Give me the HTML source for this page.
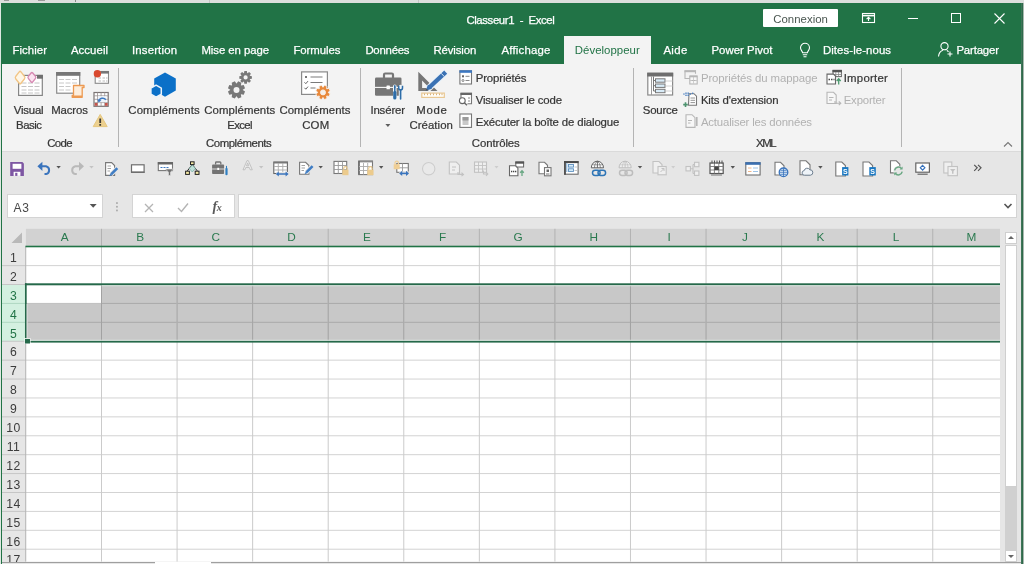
<!DOCTYPE html>
<html lang="fr"><head><meta charset="utf-8"><title>Classeur1 - Excel</title>
<style>
html,body{margin:0;padding:0}
body{width:1024px;height:564px;overflow:hidden;position:relative;background:#e6e6e6;font-family:"Liberation Sans",sans-serif;}
.abs{position:absolute}
.t{position:absolute;white-space:nowrap;line-height:1;font-size:12px}
.ch{text-align:center;color:#2a7a4f;font-size:11.8px}
.rh{text-align:center;font-size:12.2px}
svg{position:absolute;overflow:visible}
.sep{position:absolute;width:1px;top:68px;height:79px;background:#b4b4b4}
.dd{position:absolute;width:0;height:0;border-left:3px solid transparent;border-right:3px solid transparent;border-top:3px solid #666}
#w{position:absolute;left:0;top:0;width:1024px;height:564px;overflow:hidden;will-change:transform}
</style></head><body><div id="w">
<!-- outside strip -->
<div class="abs" style="left:0;top:0;width:1024px;height:3px;background:#dcdfdd"></div>
<div class="abs" style="left:75px;top:0;width:1px;height:2px;background:#8a8a8a"></div><div class="abs" style="left:209px;top:0;width:1px;height:3px;background:#c4c4c4"></div><div class="abs" style="left:418px;top:0;width:1px;height:3px;background:#c4c4c4"></div><div class="abs" style="left:4px;top:0;width:5px;height:1px;background:#9a9a9a"></div><div class="abs" style="left:38px;top:0;width:7px;height:1px;background:#9a9a9a"></div>
<div class="abs" style="left:0;top:3px;width:1px;height:561px;background:#dfe8e2"></div>
<div class="abs" style="left:1023px;top:3px;width:1px;height:561px;background:#a9b8af"></div>
<div class="abs" style="left:1px;top:3px;width:1px;height:561px;background:#217346"></div>
<div class="abs" style="left:1021px;top:3px;width:1px;height:561px;background:#3f7459"></div><div class="abs" style="left:1022px;top:3px;width:1px;height:561px;background:#2f6b4b"></div>
<!-- title + tabs -->
<div class="abs" style="left:1px;top:3px;width:1020px;height:60.5px;background:#217346"></div>
<span class="t" style="left:466.4px;top:14.65px;font-size:11.4px;color:#ffffff;letter-spacing:-0.397px;-webkit-text-stroke:0.25px #fff">Classeur1&nbsp; -&nbsp; Excel</span>
<div class="abs" style="left:763px;top:9px;width:75px;height:18px;background:#fff;border-radius:1px"></div>
<span class="t" style="left:773.2px;top:13.65px;font-size:11.4px;color:#4a5650;letter-spacing:0.034px">Connexion</span>
<!-- window buttons -->
<svg style="left:860px;top:11px" width="18" height="14" viewBox="0 0 18 14" fill="none" stroke="#fff" stroke-width="1.1"><rect x="2.5" y="2.5" width="12" height="9"/><path d="M2.5 4.6h12" stroke-width="1.6"/><path d="M8.5 10V6.3M6.6 8.2l1.9-1.9 1.9 1.9"/></svg>
<div class="abs" style="left:908px;top:18px;width:10px;height:1px;background:#fff"></div>
<div class="abs" style="left:951px;top:13px;width:9px;height:9px;border:1px solid #fff;box-sizing:border-box;width:10px;height:10px"></div>
<svg style="left:994px;top:13px" width="11" height="11" viewBox="0 0 11 11" stroke="#fff" stroke-width="1.1"><path d="M0.5 0.5l10 10M10.5 0.5l-10 10"/></svg>
<!-- tabs -->
<span class="t" style="left:12.4px;top:44.65px;font-size:11.4px;color:#ffffff;letter-spacing:0.075px;-webkit-text-stroke:0.25px #fff">Fichier</span>
<span class="t" style="left:70.9px;top:44.65px;font-size:11.4px;color:#ffffff;letter-spacing:0.068px;-webkit-text-stroke:0.25px #fff">Accueil</span>
<span class="t" style="left:131.9px;top:44.65px;font-size:11.4px;color:#ffffff;letter-spacing:0.180px;-webkit-text-stroke:0.25px #fff">Insertion</span>
<span class="t" style="left:201.4px;top:44.65px;font-size:11.4px;color:#ffffff;letter-spacing:-0.068px;-webkit-text-stroke:0.25px #fff">Mise en page</span>
<span class="t" style="left:293.4px;top:44.65px;font-size:11.4px;color:#ffffff;letter-spacing:-0.049px;-webkit-text-stroke:0.25px #fff">Formules</span>
<span class="t" style="left:365.4px;top:44.65px;font-size:11.4px;color:#ffffff;letter-spacing:-0.245px;-webkit-text-stroke:0.25px #fff">Données</span>
<span class="t" style="left:433.4px;top:44.65px;font-size:11.4px;color:#ffffff;letter-spacing:-0.121px;-webkit-text-stroke:0.25px #fff">Révision</span>
<span class="t" style="left:501.4px;top:44.65px;font-size:11.4px;color:#ffffff;letter-spacing:0.218px;-webkit-text-stroke:0.25px #fff">Affichage</span>
<div class="abs" style="left:564px;top:36px;width:87px;height:28px;background:#f3f3f3"></div>
<span class="t" style="left:574.8px;top:44.65px;font-size:11.4px;color:#217346;letter-spacing:0.035px">Développeur</span>
<span class="t" style="left:663.4px;top:44.65px;font-size:11.4px;color:#ffffff;letter-spacing:0.343px;-webkit-text-stroke:0.25px #fff">Aide</span>
<span class="t" style="left:711.4px;top:44.65px;font-size:11.4px;color:#ffffff;letter-spacing:0.036px;-webkit-text-stroke:0.25px #fff">Power Pivot</span>
<svg style="left:798px;top:41px" width="14" height="18" viewBox="0 0 14 18" fill="none" stroke="#fff" stroke-width="1.1"><path d="M4.6 11.8c0-1.6-2.1-2.6-2.1-5a4.5 4.5 0 0 1 9 0c0 2.400-2.100 3.400-2.100 5zM4.800 13.800h4.400M5.500 15.800h3"/></svg>
<span class="t" style="left:822.9px;top:44.65px;font-size:11.4px;color:#ffffff;letter-spacing:0.086px;-webkit-text-stroke:0.25px #fff">Dites-le-nous</span>
<svg style="left:937px;top:41px" width="17" height="17" viewBox="0 0 17 17" fill="none" stroke="#fff" stroke-width="1.1"><circle cx="7.500" cy="5.200" r="3.600"/><path d="M1.500 15.500c0.400-3.600 2.600-5.600 4.400-6.200M9.800 9.600c0.600 0.300 1.200 0.700 1.700 1.200M13 10.500v5M10.500 13h5"/></svg>
<span class="t" style="left:956.4px;top:44.65px;font-size:11.4px;color:#ffffff;letter-spacing:-0.152px;-webkit-text-stroke:0.25px #fff">Partager</span>
<!-- ribbon -->
<div class="abs" style="left:2px;top:63.5px;width:1019px;height:87px;background:#f3f3f3"></div>
<div class="abs" style="left:2px;top:150.5px;width:1019px;height:1px;background:#dadada"></div>
<div class="sep" style="left:118px"></div>
<div class="sep" style="left:360px"></div>
<div class="sep" style="left:632.5px"></div>
<div class="sep" style="left:901px"></div>
<!-- group Code -->
<svg style="left:0;top:0" width="1024" height="564" viewBox="0 0 1024 564" fill="none">
<!-- Visual Basic -->
<g>
<rect x="18.600" y="75.400" width="23.700" height="20" fill="#fff" stroke="#858585" stroke-width="1.200"/>
<rect x="37" y="74.900" width="5.900" height="3.800" fill="#6f6f6f"/>
<g stroke="#c4c4c4" stroke-width="1"><path d="M21.500 83h5M28 83h5M34.500 83h5M21.500 86.500h5M28 86.500h5M34.500 86.500h5M21.500 90h5M28 90h5M34.500 90h5M21.500 93h5M28 93h5M34.500 93h5"/></g>
<rect x="-4.300" y="-4.300" width="8.600" height="8.600" rx="1.600" transform="translate(20.100 77.600) scale(0.880 1.120) rotate(45)" fill="#fef6e6" stroke="#f2c585" stroke-width="1.400"/>
<rect x="-3.500" y="-3.500" width="7" height="7" rx="1.500" transform="translate(31.900 77.400) scale(0.900 1.100) rotate(45)" fill="#fbe3f0" stroke="#d78ab3" stroke-width="1.400"/>
</g>
<!-- Macros -->
<g>
<rect x="56.700" y="72.600" width="23" height="20.600" fill="#fff" stroke="#8a8a8a" stroke-width="1.200"/>
<rect x="56.100" y="72" width="24.200" height="3.800" fill="#777"/>
<g stroke="#c8c8c8" stroke-width="1"><path d="M59 79.500h5M65.500 79.500h5M72 79.500h5M59 83h5M65.500 83h5M72 83h5M59 86.500h5M65.500 86.500h5M59 90h5M65.500 90h5"/></g>
<path d="M73.500 85.500h10.500v2h-1.800v9.800h-10v-2h1.300z" fill="#fdeedd" stroke="#ed9a52" stroke-width="1.300" stroke-linejoin="round"/>
<path d="M72 96.500h10" stroke="#ed9a52" stroke-width="2"/>
</g>
<!-- small: record macro -->
<g>
<rect x="95.200" y="71.500" width="13.300" height="11.800" fill="#fff" stroke="#8a8a8a" stroke-width="1.100"/>
<rect x="101" y="71" width="8" height="2.600" fill="#777"/>
<g stroke="#bbb" stroke-width="1"><path d="M98.500 78h2.500M102.500 78h2.500M98.500 81h2.500M102.500 81h2.500M106 78h1.500M106 81h1.500"/></g>
<circle cx="97.400" cy="73.700" r="3.700" fill="#d9492f"/>
</g>
<!-- small: relative refs -->
<g>
<rect x="94" y="92.500" width="14.200" height="13.800" fill="#fff" stroke="#7a7474" stroke-width="1.200"/>
<path d="M94 95.800h14.200M94 99.300h14.200M94 102.600h14.200M97.500 92.500v13.800M101.100 92.500v13.800M104.700 92.500v13.800" stroke="#9a9292" stroke-width=".8"/>
<rect x="94.700" y="103" width="2.800" height="2.800" fill="#c5544b"/><rect x="104.900" y="103" width="2.800" height="2.800" fill="#c5544b"/>
<rect x="97.900" y="96.200" width="8.400" height="6" fill="#eef4fa"/>
<path d="M99 101c.3-2.800 4.800-4 6.800-1.200" stroke="#3d78c0" stroke-width="1.500"/><path d="M97.300 99l1.200 3.400 2.900-1.900z" fill="#3d78c0"/>
</g>
<!-- small: warning -->
<g>
<path d="M100.200 114.400l7 12.200h-14z" fill="#ecd08f" stroke="#e6c77e" stroke-width="1" stroke-linejoin="round"/>
<path d="M100.200 118.400v4.600M100.200 124v1.700" stroke="#3e3a33" stroke-width="1.800"/>
</g>
<!-- Compléments (hexagons) -->
<g>
<path d="M165 72.400l10.800 6v12.200l-10.800 6.100-10.800-6.100v-12.200z" fill="#0b70c8"/>
<path d="M156.100 85.200l5.200 3v6l-5.200 3-5.200-3v-6z" fill="#0b70c8" stroke="#eef4fa" stroke-width="1.500" stroke-linejoin="round"/>
</g>
<!-- Gears -->
<path d="M242.80 90.02 L245.03 91.60 L243.73 94.73 L241.04 94.27 L240.87 94.44 L241.33 97.13 L238.20 98.43 L236.62 96.20 L236.38 96.20 L234.80 98.43 L231.67 97.13 L232.13 94.44 L231.96 94.27 L229.27 94.73 L227.97 91.60 L230.20 90.02 L230.20 89.78 L227.97 88.20 L229.27 85.07 L231.96 85.53 L232.13 85.36 L231.67 82.67 L234.80 81.37 L236.38 83.60 L236.62 83.60 L238.20 81.37 L241.33 82.67 L240.87 85.36 L241.04 85.53 L243.73 85.07 L245.03 88.20 L242.80 89.78Z M239.50 89.90a3.0 3.0 0 1 0 -6.00 0a3.0 3.0 0 1 0 6.00 0Z" fill="#787878" fill-rule="evenodd"/>
<path d="M249.79 75.76 L251.88 76.15 L251.88 78.65 L249.79 79.04 L249.72 79.20 L250.92 80.96 L249.16 82.72 L247.40 81.52 L247.24 81.59 L246.85 83.68 L244.35 83.68 L243.96 81.59 L243.80 81.52 L242.04 82.72 L240.28 80.96 L241.48 79.20 L241.41 79.04 L239.32 78.65 L239.32 76.15 L241.41 75.76 L241.48 75.60 L240.28 73.84 L242.04 72.08 L243.80 73.28 L243.96 73.21 L244.35 71.12 L246.85 71.12 L247.24 73.21 L247.40 73.28 L249.16 72.08 L250.92 73.84 L249.72 75.60Z M247.70 77.40a2.1 2.1 0 1 0 -4.20 0a2.1 2.1 0 1 0 4.20 0Z" fill="#787878" fill-rule="evenodd"/>
<!-- COM -->
<g>
<rect x="301.600" y="71.900" width="25.800" height="22.500" fill="#fff" stroke="#8a8a8a" stroke-width="1.200"/>
<path d="M310.500 77h12M310.500 82.500h12M310.500 88h5" stroke="#7a7a7a" stroke-width="1.100"/>
<rect x="305" y="76" width="2" height="2" fill="#777"/>
<path d="M304.500 82.300l1.300 1.400 2.200-2.600M304.500 87.800l1.300 1.400 2.200-2.600" stroke="#666" stroke-width="1"/>
<circle cx="323" cy="92.400" r="6.200" fill="#f6efe8"/><path d="M328.20 92.50 L330.16 93.82 L329.07 96.46 L326.75 96.00 L326.60 96.15 L327.06 98.47 L324.42 99.56 L323.10 97.60 L322.90 97.60 L321.58 99.56 L318.94 98.47 L319.40 96.15 L319.25 96.00 L316.93 96.46 L315.84 93.82 L317.80 92.50 L317.80 92.30 L315.84 90.98 L316.93 88.34 L319.25 88.80 L319.40 88.65 L318.94 86.33 L321.58 85.24 L322.90 87.20 L323.10 87.20 L324.42 85.24 L327.06 86.33 L326.60 88.65 L326.75 88.80 L329.07 88.34 L330.16 90.98 L328.20 92.30Z M325.50 92.40a2.5 2.5 0 1 0 -5.00 0a2.5 2.5 0 1 0 5.00 0Z" fill="#e8883a" stroke="#f6f1ec" stroke-width=".9" fill-rule="evenodd"/>
</g>
<!-- Insérer -->
<g>
<path d="M384 78v-3.300a1.200 1.200 0 0 1 1.200-1.200h6.600a1.200 1.200 0 0 1 1.200 1.200v3.300" stroke="#767676" stroke-width="2.200"/>
<rect x="375" y="77.500" width="26.500" height="18.300" rx="1.300" fill="#767676"/>
<path d="M375 87.400h26.500" stroke="#fbfbfb" stroke-width="1.100"/>
<rect x="386.500" y="85.600" width="3.400" height="3.600" rx=".5" fill="#fff"/>
<g stroke="#eef4f9" stroke-width="3.600" stroke-linecap="round"><path d="M394.800 86.200v12.600M400.600 86.500v12.300"/></g>
<path d="M394.800 85.200v6" stroke="#2e6da8" stroke-width="1.500"/><path d="M394.800 85.200l-.9 2.600h1.800z" fill="#2e6da8"/><path d="M394.800 92.400v5.600" stroke="#2e6da8" stroke-width="3.200" stroke-linecap="round"/>
<path d="M400.600 90v9" stroke="#2e6da8" stroke-width="1.600" stroke-linecap="round"/><path d="M398.700 85.800v2.200a1.900 1.900 0 0 0 3.800 0v-2.200" stroke="#2e6da8" stroke-width="1.500"/>
</g>
<!-- Mode création -->
<g>
<path d="M418.300 71.700v19.200h19.200z M422.100 80.400v7.600h7.300z" fill="#767676" fill-rule="evenodd"/>
<path d="M446.300 71.600l-19 17.700" stroke="#eaf2f9" stroke-width="6.600"/>
<path d="M445.700 72.100l-16.200 15.100" stroke="#3b72b4" stroke-width="4.300"/>
<path d="M428 84.600l-2.300 6.200 6.300-2z" fill="#3b72b4"/>
<path d="M425.700 90.800l.8-2.200 1.500 1.500z" fill="#555"/>
<path d="M441.200 73.300l3.200 3.400" stroke="#dbe8f5" stroke-width="1"/>
<rect x="421.800" y="93.100" width="22.500" height="4.300" fill="#fffdf8" stroke="#e9c893" stroke-width="1.200"/>
<path d="M424.500 93.500v1.700M427.500 93.500v1.700M430.500 93.500v1.700M433.500 93.500v1.700M436.500 93.500v1.700M439.500 93.500v1.700M442 93.500v1.700" stroke="#d9b27a" stroke-width="1"/>
</g>
<!-- small: properties -->
<g>
<rect x="459.900" y="70.800" width="11.600" height="13.200" fill="#fff" stroke="#777" stroke-width="1.100"/>
<rect x="459.400" y="70.300" width="12.600" height="2.500" fill="#3c78c2"/>
<rect x="462" y="75.300" width="2" height="2" fill="#666"/><path d="M465.500 76.300h4M465.500 80.500h4" stroke="#888" stroke-width="1"/><circle cx="463" cy="80.500" r="1" stroke="#666" stroke-width=".8"/>
</g>
<!-- small: view code -->
<g>
<path d="M461 100v-6.700h10.500v10.500h-4" stroke="#777" stroke-width="1.100" fill="#fff"/>
<rect x="460.500" y="92.800" width="11.500" height="2.200" fill="#666"/>
<path d="M468 98h2M468 101h2" stroke="#888" stroke-width="1"/>
<circle cx="462.300" cy="100.700" r="2.900" fill="#fff" stroke="#666" stroke-width="1.100"/><path d="M464.300 102.800l2.700 2.500" stroke="#666" stroke-width="1.400"/>
</g>
<!-- small: run dialog -->
<g>
<rect x="459.900" y="114" width="11.600" height="13.400" fill="#fff" stroke="#777" stroke-width="1.100"/>
<rect x="462.500" y="117" width="6" height="8" fill="#c9c9c9"/><rect x="462.500" y="117" width="6" height="3.500" fill="#9a9a9a"/>
</g>
<!-- Source -->
<g>
<rect x="647.800" y="73.300" width="24.800" height="21.700" fill="#fff" stroke="#8a8a8a" stroke-width="1.200"/>
<rect x="647.200" y="72.700" width="26" height="3.800" fill="#6e6e6e"/>
<path d="M651.500 76.500v18.500" stroke="#9a9a9a" stroke-width="1"/>
<path d="M666 81h6.500M666 86h6.500M666 91h6.500" stroke="#d0d0d0" stroke-width="1"/>
<path d="M653.500 76.500v14.500h2M653.500 80.500h2M653.500 85.700h2" stroke="#777" stroke-width="1"/>
<g fill="#d9ecf8" stroke="#777" stroke-width="1"><rect x="655.500" y="78.800" width="9.500" height="3.400"/><rect x="655.500" y="84" width="9.500" height="3.400"/><rect x="655.500" y="89.300" width="9.500" height="3.400"/></g>
</g>
<!-- small XML: map props (disabled) -->
<g stroke="#b6b6b6" stroke-width="1.100">
<path d="M691 78.500h-6v-7.700h10.500v3" fill="none"/><path d="M684.500 71.300h11.500" stroke-width="1.800"/>
<rect x="689.800" y="76" width="7.400" height="8" fill="#f7f7f7"/><path d="M689.800 76.500h7.400" stroke-width="1.600"/>
<path d="M691.500 80.500h1.500M694 80.500h1.500" stroke-width="1"/><path d="M693.500 77v6.500M690 80.500h7" stroke-width=".6"/>
</g>
<!-- small XML: expansion packs -->
<g>
<path d="M689 93.700h5l2.500 2.500v9h-8z" fill="#fff" stroke="#777" stroke-width="1.100"/>
<path d="M690.500 98h4.500M690.500 100.300h4.500M690.500 102.600h4.500" stroke="#888" stroke-width=".9"/>
<g fill="#4a7fc0"><rect x="683.300" y="93.400" width="1.300" height="1.300"/><rect x="685.300" y="92.500" width="1.400" height="1.400"/><rect x="685.300" y="94.600" width="1.400" height="1.400"/><rect x="687.500" y="92.500" width="1.400" height="1.400"/><rect x="687.500" y="94.600" width="1.400" height="1.400"/><rect x="689.700" y="93.400" width="1.300" height="1.300"/><rect x="692" y="92.600" width="1.300" height="1.300"/></g>
<path d="M685.500 102.300v4.600M683.200 104.600h4.600" stroke="#4f9470" stroke-width="1.600"/>
</g>
<!-- small XML: refresh data (disabled) -->
<g stroke="#b6b6b6" stroke-width="1.100">
<path d="M686 114.700h6l3 3v9.700h-9z" fill="#f7f7f7"/>
<path d="M688 120.500h4M688 123h2.500" stroke-width="1"/><path d="M696.800 117v9" stroke-width="1.600"/>
</g>
<!-- Import -->
<g>
<rect x="833" y="70.400" width="8.400" height="6.200" fill="#fff" stroke="#666" stroke-width="1"/><rect x="832.500" y="69.900" width="9.400" height="2.400" fill="#555"/>
<path d="M835.800 72v4.500M838.600 72v4.500M833 74.500h8.400" stroke="#888" stroke-width=".8"/>
<path d="M827 74.100h6.500l2 2v7.900h-8.500z" fill="#fff" stroke="#666" stroke-width="1.100"/>
<path d="M828.500 79.500h1.500M831 79.500h1.500M833.500 79.500h1" stroke="#444" stroke-width="1.300"/>
<path d="M838.700 84.500v-5.500M836.700 81l2-2.200 2 2.200" stroke="#4d9a6f" stroke-width="1.300"/>
</g>
<!-- Export (disabled) -->
<g stroke="#b6b6b6" stroke-width="1.100">
<path d="M827 92.300h6.500l2.700 2.700v8.500h-9.200z" fill="#f7f7f7"/>
<path d="M829 97.500h4.500M829 100h3" stroke-width="1"/>
<path d="M835 101v2.200h5.500M838.800 101.300l2 1.900-2 1.900" />
</g>
</svg>

<span class="t" style="left:13.8px;top:104.65px;font-size:11.4px;color:#363636;letter-spacing:-0.218px;-webkit-text-stroke:0.22px #363636">Visual</span>
<span class="t" style="left:16.1px;top:119.65px;font-size:11.4px;color:#363636;letter-spacing:-0.530px;-webkit-text-stroke:0.22px #363636">Basic</span>
<span class="t" style="left:51.2px;top:104.65px;font-size:11.4px;color:#363636;letter-spacing:-0.141px;-webkit-text-stroke:0.22px #363636">Macros</span>
<span class="t" style="left:47.2px;top:137.65px;font-size:11.4px;color:#363636;letter-spacing:-0.631px;-webkit-text-stroke:0.22px #363636">Code</span>
<!-- group Compléments -->
<span class="t" style="left:128.3px;top:104.65px;font-size:11.4px;color:#363636;letter-spacing:0.116px;-webkit-text-stroke:0.22px #363636">Compléments</span>
<span class="t" style="left:204.2px;top:104.65px;font-size:11.4px;color:#363636;letter-spacing:0.076px;-webkit-text-stroke:0.22px #363636">Compléments</span>
<span class="t" style="left:227.2px;top:119.65px;font-size:11.4px;color:#363636;letter-spacing:-0.630px;-webkit-text-stroke:0.22px #363636">Excel</span>
<span class="t" style="left:279.4px;top:104.65px;font-size:11.4px;color:#363636;letter-spacing:0.086px;-webkit-text-stroke:0.22px #363636">Compléments</span>
<span class="t" style="left:302.2px;top:119.65px;font-size:11.4px;color:#363636;letter-spacing:0.181px;-webkit-text-stroke:0.22px #363636">COM</span>
<span class="t" style="left:206.1px;top:137.65px;font-size:11.4px;color:#363636;letter-spacing:-0.464px;-webkit-text-stroke:0.22px #363636">Compléments</span>
<!-- group Contrôles -->
<span class="t" style="left:370.4px;top:104.65px;font-size:11.4px;color:#363636;letter-spacing:-0.136px;-webkit-text-stroke:0.22px #363636">Insérer</span>
<svg style="left:384px;top:122px" width="8" height="6" viewBox="0 0 8 6"><path d="M1.400 2h5l-2.500 2.900z" fill="#5e5e5e"/></svg>
<span class="t" style="left:416.2px;top:104.65px;font-size:11.4px;color:#363636;letter-spacing:0.713px;-webkit-text-stroke:0.22px #363636">Mode</span>
<span class="t" style="left:409.4px;top:119.65px;font-size:11.4px;color:#363636;letter-spacing:0.068px;-webkit-text-stroke:0.22px #363636">Création</span>
<span class="t" style="left:475.7px;top:72.65px;font-size:11.4px;color:#363636;letter-spacing:-0.131px;-webkit-text-stroke:0.22px #363636">Propriétés</span>
<span class="t" style="left:475.7px;top:94.65px;font-size:11.4px;color:#363636;letter-spacing:-0.161px;-webkit-text-stroke:0.22px #363636">Visualiser le code</span>
<span class="t" style="left:475.7px;top:116.65px;font-size:11.4px;color:#363636;letter-spacing:-0.140px;-webkit-text-stroke:0.22px #363636">Exécuter la boîte de dialogue</span>
<span class="t" style="left:471.8px;top:137.65px;font-size:11.4px;color:#363636;letter-spacing:-0.101px;-webkit-text-stroke:0.22px #363636">Contrôles</span>
<!-- group XML -->
<span class="t" style="left:642.8px;top:104.65px;font-size:11.4px;color:#363636;letter-spacing:-0.211px;-webkit-text-stroke:0.22px #363636">Source</span>
<span class="t" style="left:700.9px;top:72.65px;font-size:11.4px;color:#b1b1b1;letter-spacing:-0.089px">Propriétés du mappage</span>
<span class="t" style="left:700.9px;top:94.65px;font-size:11.4px;color:#363636;letter-spacing:-0.120px;-webkit-text-stroke:0.22px #363636">Kits d'extension</span>
<span class="t" style="left:700.9px;top:116.65px;font-size:11.4px;color:#b1b1b1;letter-spacing:-0.165px">Actualiser les données</span>
<span class="t" style="left:843.7px;top:72.65px;font-size:11.4px;color:#363636;letter-spacing:0.260px;-webkit-text-stroke:0.22px #363636">Importer</span>
<span class="t" style="left:843.7px;top:94.65px;font-size:11.4px;color:#b1b1b1;letter-spacing:-0.175px">Exporter</span>
<span class="t" style="left:756.0px;top:137.65px;font-size:11.4px;color:#363636;letter-spacing:-1.441px;-webkit-text-stroke:0.22px #363636">XML</span>
<svg style="left:1003px;top:141px" width="10" height="7" viewBox="0 0 10 7" fill="none" stroke="#777" stroke-width="1.1"><path d="M1 5.500l4-4 4 4"/></svg>
<!-- QAT -->
<svg style="left:0;top:0" width="1024" height="564" viewBox="0 0 1024 564" fill="none">
<!-- save -->
<path d="M10.200 162.100h12.200l1.500 1.500v12.300h-13.700z" fill="#7e57a3"/>
<rect x="12.600" y="163.800" width="8.800" height="5" fill="#fff"/><rect x="13.600" y="171.800" width="6.800" height="4.100" fill="#fff"/><rect x="15.200" y="172.800" width="2.200" height="3.100" fill="#7e57a3"/>
<!-- undo -->
<path d="M39.500 166.300h6.500a4 4 0 0 1 0 7.800h-1.500" stroke="#3a74bd" stroke-width="2" />
<path d="M37.400 166.300l5-4.600v9.200z" fill="#3a74bd"/>
<path d="M56.400 165.900h4.400l-2.200 2.700z" fill="#555"/>
<!-- redo -->
<path d="M81.800 166.300h-6.500a4 4 0 0 0 0 7.800h1.500" stroke="#b9b9b9" stroke-width="2" />
<path d="M84 166.300l-5-4.600v9.200z" fill="#b9b9b9"/>
<path d="M89.300 165.900h4.400l-2.200 2.700z" fill="#c3c3c3"/>
<!-- doc pencil -->
<g id="docpen">
<path d="M105.600 162.600h6l3 3v9.800h-9z" fill="#fff" stroke="#777" stroke-width="1.100"/>
<path d="M107.500 166h3.500M107.500 168.500h3.500M107.500 171h2.500" stroke="#999" stroke-width=".9"/>
<path d="M117.300 168.200l-6.300 6.300" stroke="#e6e6e6" stroke-width="4.500"/>
<path d="M117.300 168.200l-6 6" stroke="#3f7dc4" stroke-width="2.600"/><path d="M110.600 173.300l-1.300 3 3-1.200z" fill="#3f7dc4"/>
</g>
<!-- rectangle -->
<rect x="131.500" y="164.800" width="12.600" height="7.400" fill="#fff" stroke="#6e6e6e" stroke-width="1.200"/><path d="M131 172.300h13.600" stroke="#6e6e6e" stroke-width="1.400"/>
<!-- filter form -->
<rect x="158.300" y="162.600" width="14.200" height="8" fill="#fff" stroke="#777" stroke-width="1.100"/><rect x="157.800" y="162.100" width="15.200" height="2.400" fill="#666"/>
<path d="M160.500 167.500h2M163.500 167.500h2M166.500 167.500h2" stroke="#3d78c0" stroke-width="1.200"/>
<path d="M165.500 169h8l-3 3.200v3.300h-2v-3.300z" fill="#707070" stroke="#e6e6e6" stroke-width=".6"/>
<!-- org chart -->
<path d="M192.300 164.600l-5 6.300M192.300 164.600l5 6.300" stroke="#222" stroke-width="1"/>
<path d="M192.300 165l3 3.500-3 3.500-3-3.500z" fill="#bfe0d9" stroke="#7fb5aa" stroke-width=".8"/>
<rect x="190.500" y="161.800" width="3.600" height="2.800" fill="#f5e9a4" stroke="#222" stroke-width="1"/>
<rect x="185.600" y="171.200" width="3.800" height="3.200" fill="#f5e9a4" stroke="#222" stroke-width="1"/>
<rect x="195.200" y="171.200" width="3.800" height="3.200" fill="#f5e9a4" stroke="#222" stroke-width="1"/>
<!-- briefcase small -->
<path d="M215.600 164.600v-1.800a.8 .8 0 0 1 .8-.8h3.600a.8 .8 0 0 1 .8 .8v1.800" stroke="#737373" stroke-width="1.300"/>
<rect x="212.100" y="164.600" width="12" height="9.400" rx=".8" fill="#737373"/><path d="M212.100 169h12" stroke="#e6e6e6" stroke-width=".9"/><rect x="217.300" y="167.800" width="1.800" height="2.200" fill="#fff"/>
<path d="M226.500 166v8.500" stroke="#e6e6e6" stroke-width="3.600"/><path d="M226.500 165.900v3" stroke="#2f7fc1" stroke-width="1"/><path d="M226.500 168.900v5.300" stroke="#2f7fc1" stroke-width="2.200" stroke-linecap="round"/>
<!-- A disabled -->
<path d="M243 169.800l4-9.200h1.300l4 9.200h-2.100l-.9-2.300h-3.500l-.9 2.300zM246.500 165.900h2.300l-1.150-3z" fill="#ededed" stroke="#bdbdbd" stroke-width=".9" stroke-linejoin="round"/>
<path d="M259 165.900h4.400l-2.200 2.700z" fill="#c3c3c3"/>
<!-- table with blue arrow -->
<rect x="273.800" y="162" width="13.600" height="11.500" fill="#fff" stroke="#666" stroke-width="1.100"/><path d="M273.800 162.700h13.600" stroke="#777" stroke-width="1.600"/>
<path d="M278.300 163v10M282.800 163v10M274 166.500h13.300M274 170h13.300" stroke="#aaa" stroke-width=".9"/>
<path d="M276 174h12.500" stroke="#e6e6e6" stroke-width="4.200"/>
<path d="M277.500 174h9.500" stroke="#3a74bd" stroke-width="1.500"/><path d="M275.800 174l3-2.500v5zM288.600 174l-3-2.500v5z" fill="#3a74bd"/>
<!-- doc pencil 2 -->
<path d="M299.600 162.300h6l3.300 3.300v8.700h-9.300z" fill="#fff" stroke="#777" stroke-width="1.100"/>
<path d="M301.500 165.500h3.500M301.500 168h3.500M301.500 170.500h2.500" stroke="#999" stroke-width=".9"/>
<path d="M312.600 166.200l-6.300 6.300" stroke="#e6e6e6" stroke-width="4.500"/>
<path d="M312.600 166.200l-6 6" stroke="#3f7dc4" stroke-width="2.600"/><path d="M305.900 171.300l-1.300 3 3-1.200z" fill="#3f7dc4"/>
<path d="M318.500 165.900h4.400l-2.200 2.700z" fill="#555"/>
<!-- table w lock -->
<g id="tbllock">
<rect x="334" y="161.400" width="12.700" height="12.100" fill="#fff" stroke="#777" stroke-width="1.100"/>
<path d="M338.300 161.500v12M342.500 161.500v12M334 165.500h12.700M334 169.500h12.700" stroke="#999" stroke-width=".9"/>
<rect x="342.300" y="169.600" width="6.200" height="5.600" fill="#eccb8d"/><path d="M343.700 169.600v-1.200a1.700 1.700 0 0 1 3.400 0v1.200" stroke="#eccb8d" stroke-width="1.200"/>
</g>
<!-- table w lock + dd -->
<rect x="358.700" y="161" width="13.800" height="13.600" fill="#fff" stroke="#777" stroke-width="1.100"/><path d="M358.700 161.600h13.800" stroke="#8a8a8a" stroke-width="1.600"/><path d="M359.100 161v13.600" stroke="#666" stroke-width="1.400"/>
<path d="M363.500 163v11.500M367.700 163v11.500M359 166.500h13.500M359 170.500h13.500" stroke="#aaa" stroke-width=".9"/>
<rect x="367.300" y="169.600" width="6.200" height="5.600" fill="#eccb8d"/><path d="M368.700 169.600v-1.200a1.700 1.700 0 0 1 3.400 0v1.200" stroke="#eccb8d" stroke-width="1.200"/>
<path d="M379 166.100h4.400l-2.200 2.700z" fill="#555"/>
<!-- lock + table + blue arrow -->
<rect x="396.800" y="163.500" width="11.500" height="8.800" fill="#fff" stroke="#777" stroke-width="1.100"/><path d="M402.500 163.500v8.800M397 167.800h11.300" stroke="#999" stroke-width=".9"/>
<rect x="393.700" y="164.200" width="6" height="5" fill="#f0cf95"/><path d="M395 164.200v-1.300a1.700 1.700 0 0 1 3.400 0v1.300" stroke="#f0cf95" stroke-width="1.200"/>
<path d="M399.400 173.400h9.400" stroke="#e6e6e6" stroke-width="4.200"/><path d="M401 173.400h6.500" stroke="#3a74bd" stroke-width="1.600"/><path d="M399.200 173.400l3-2.600v5.200zM409 173.400l-3-2.600v5.200z" fill="#3a74bd"/>
<!-- circle disabled -->
<circle cx="428.700" cy="168.700" r="6.200" fill="#e9e9e9" stroke="#cdcdcd" stroke-width="1.100"/>
<!-- doc grey arrow -->
<g stroke="#c2c2c2" stroke-width="1.100"><path d="M449.300 162h7l3.200 3.200v8.800h-10.200z" fill="#efefef"/><path d="M452 167h4M452 170h3" stroke-width="1"/><path d="M458 172v2.400h5M461.500 172.600l2 1.800-2 1.800"/></g>
<!-- table grey arrow -->
<g stroke="#c2c2c2" stroke-width="1.100"><rect x="474.500" y="162" width="12" height="10.300" fill="#efefef"/><path d="M478.500 162v10.300M482.500 162v10.300M474.500 165.500h12M474.500 169h12" stroke-width=".9"/><path d="M483.500 170.500v3.500h4M486 172.200l1.800 1.800-1.800 1.800"/></g>
<path d="M494.500 165.900h4l-2 2.500z" fill="#cdcdcd"/>
<!-- import-like -->
<rect x="515.800" y="162" width="7.800" height="5" fill="#fff" stroke="#666" stroke-width="1"/><rect x="515.300" y="161.500" width="8.800" height="2.200" fill="#555"/>
<path d="M509.500 165.800h6l2.400 2.400v7.600h-8.400z" fill="#fff" stroke="#666" stroke-width="1.100"/>
<path d="M511 171.500h1.300M513 171.500h1.300M515 171.500h1.300" stroke="#444" stroke-width="1.300"/>
<path d="M522 176v-5M520.200 172.800l1.800-2 1.800 2" stroke="#6aa884" stroke-width="1.300"/>
<!-- doc doc -->
<path d="M539 162.300h5.500l3 3v8.500h-8.500z" fill="#fff" stroke="#777" stroke-width="1.100"/>
<rect x="544.500" y="167.600" width="6.500" height="8.200" fill="#fff" stroke="#777" stroke-width="1.100"/><rect x="546.500" y="169.500" width="2.500" height="2.500" fill="#666"/><path d="M546 174h3.500" stroke="#777" stroke-width="1"/>
<!-- source small -->
<rect x="564.700" y="161.600" width="13.400" height="12.600" fill="#fff" stroke="#6a6a6a" stroke-width="1.100"/><path d="M564.200 162.100h14.400" stroke="#4a4a4a" stroke-width="2"/><path d="M565 161.100v13.600" stroke="#4a4a4a" stroke-width="1.700"/>
<path d="M566.800 163v9" stroke="#7aa7cf" stroke-width="1"/><path d="M574.500 167h3.500M574.500 170.500h3.500" stroke="#bbb" stroke-width=".8"/>
<g fill="#d9ecf8" stroke="#5b8fbf" stroke-width=".9"><rect x="568.500" y="164.500" width="5" height="2.600"/><rect x="568.500" y="168.800" width="5" height="2.600"/></g>
<!-- globe chain blue -->
<g stroke="#5e5e5e" stroke-width="1"><path d="M591.300 167.800a6.100 6.600 0 0 1 12.200 0z" fill="#fff"/><path d="M597.400 161.300v6.500" stroke-width=".9"/><path d="M594.500 167.800c0-3.200 1.200-5.800 2.900-6.500M600.300 167.800c0-3.200-1.200-5.800-2.900-6.500" stroke-width=".7" fill="none"/><path d="M592.200 164.800h10.400" stroke-width=".6"/></g>
<g stroke="#2e75b6" stroke-width="1.500" fill="none"><rect x="592.500" y="170.200" width="7.600" height="5.200" rx="2.600"/><rect x="598" y="170.200" width="7.600" height="5.200" rx="2.600"/></g>
<!-- globe chain grey -->
<g stroke="#bdbdbd" stroke-width="1"><path d="M619 167.800a6.100 6.600 0 0 1 12.200 0z" fill="#efefef"/><path d="M625.100 161.300v6.500" stroke-width=".9"/><path d="M622.200 167.800c0-3.200 1.200-5.800 2.900-6.500M628 167.800c0-3.200-1.200-5.800-2.900-6.500" stroke-width=".7" fill="none"/><path d="M619.900 164.800h10.400" stroke-width=".6"/></g>
<g stroke="#bdbdbd" stroke-width="1.500" fill="none"><rect x="619.500" y="170.200" width="7.600" height="5.200" rx="2.600"/><rect x="625" y="170.200" width="7.600" height="5.200" rx="2.600"/></g>
<path d="M637.800 165.900h4.400l-2.200 2.700z" fill="#555"/>
<!-- grey docs -->
<g stroke="#c2c2c2" stroke-width="1.100"><path d="M653 161.500h6l3 3v8.500h-9z" fill="#efefef"/><rect x="658" y="166.500" width="8.200" height="8.300" fill="#efefef"/><path d="M660.500 172l3.500-3.500M661.500 168.500h2.500v2.500" stroke-width="1"/></g>
<path d="M671.200 165.900h4l-2 2.500z" fill="#cdcdcd"/>
<!-- grey org -->
<g stroke="#c2c2c2" stroke-width="1.100" fill="#efefef"><path d="M689.500 168.700h3.500M693 164.500v9M693 164.500h1.500M693 173.500h1.500" fill="none"/><rect x="686" y="166.500" width="4.400" height="4.400"/><rect x="694.500" y="162.300" width="4.400" height="4.400"/><rect x="694.500" y="171" width="4.400" height="4.400"/></g>
<!-- calendar -->
<rect x="710" y="163" width="13.200" height="10.500" fill="#fff" stroke="#555" stroke-width="1.200"/>
<path d="M714.400 163v10.500M718.800 163v10.500M710 166.500h13.200M710 170h13.200" stroke="#777" stroke-width=".9"/>
<rect x="714.400" y="166.500" width="4.400" height="3.500" fill="#444"/>
<path d="M712 160.500v3M714.500 160.500v3M717 160.500v3M719.500 160.500v3M722 160.500v3" stroke="#555" stroke-width="1"/>
<path d="M711 175h11" stroke="#777" stroke-width="1"/>
<path d="M730.600 166.100h4.400l-2.200 2.700z" fill="#555"/>
<!-- form blue -->
<rect x="745.800" y="162.700" width="14.300" height="12.300" fill="#fff" stroke="#6f6f6f" stroke-width="1.100"/><rect x="745.300" y="162.200" width="15.300" height="2.600" fill="#3b6fb0"/>
<path d="M748 168h3.500M748 171.500h3.500" stroke="#f0b68a" stroke-width="1"/><path d="M753 168h5M753 171.500h5" stroke="#9ec3e6" stroke-width="1"/>
<!-- doc globe -->
<path d="M775 162.300h5.500l3.500 3.500v9.200h-9z" fill="#fff" stroke="#777" stroke-width="1.100"/>
<circle cx="783.500" cy="172.300" r="4.300" fill="#dbe9f6" stroke="#3a74bd" stroke-width="1.300"/><path d="M779.500 172.300h8M783.500 168.300v8M780.500 170.300h6M780.500 174.300h6" stroke="#3a74bd" stroke-width=".8"/>
<!-- doc cloud -->
<path d="M800 160.800h6l4 4v10h-10z" fill="#fff" stroke="#777" stroke-width="1.100"/>
<path d="M804.500 175.200a2.300 2.300 0 0 1-.3-4.600a3 3 0 0 1 5.600-.8a2.700 2.700 0 0 1 .6 5.400z" fill="#eef3f8" stroke="#6d7e8f" stroke-width="1"/>
<path d="M818.200 166.100h4.400l-2.200 2.700z" fill="#555"/>
<!-- doc S 1 -->
<path d="M835.800 162h6l3.600 3.600v10.400h-9.600z" fill="#fff" stroke="#777" stroke-width="1.100"/>
<rect x="842.100" y="167.100" width="6.300" height="8.400" fill="#1a78c2"/><text x="845.250" y="174.300" font-family="Liberation Sans,sans-serif" font-weight="bold" font-size="7" fill="#fff" text-anchor="middle">S</text>
<!-- doc S 2 -->
<path d="M863 162h6l3.600 3.600v10.400h-9.600z" fill="#fff" stroke="#777" stroke-width="1.100"/>
<rect x="869.300" y="167.100" width="6.500" height="8.400" fill="#1a78c2"/><text x="872.550" y="174.300" font-family="Liberation Sans,sans-serif" font-weight="bold" font-size="7" fill="#fff" text-anchor="middle">S</text>
<!-- doc refresh -->
<path d="M890.500 160.800h5.800l3.500 3.500v8.600h-9.300z" fill="#fff" stroke="#777" stroke-width="1.100"/>
<circle cx="898.400" cy="171" r="5" fill="#e6e6e6"/>
<path d="M894.600 170.300a3.900 3.900 0 0 1 7-1.600M902.200 171.700a3.900 3.900 0 0 1-7 1.600" stroke="#6aa884" stroke-width="1.500"/><path d="M902.600 166.500v3h-3zM894.200 175.500v-3h3z" fill="#6aa884"/>
<!-- monitor -->
<rect x="915.800" y="163" width="13.600" height="9.200" fill="#fff" stroke="#666" stroke-width="1.200"/><path d="M917.500 174.200h10.200" stroke="#666" stroke-width="1.200"/>
<path d="M922.600 165.300l2.300 2.400-2.300 2.400-2.300-2.400z" stroke="#3a74bd" stroke-width="1.200" fill="#fff"/>
<!-- grey docs filter -->
<g stroke="#c2c2c2" stroke-width="1.100"><rect x="943.800" y="162" width="8" height="11" fill="#efefef"/><rect x="948" y="166.500" width="9.400" height="9.200" fill="#efefef"/><path d="M950 169h5.500l-2 2.300v2.500h-1.500v-2.500z" fill="#c2c2c2" stroke="none"/></g>
<!-- >> -->
<path d="M974.200 164.800l3 3-3 3M978 164.800l3 3-3 3" stroke="#555" stroke-width="1.200"/>
</svg>

<!-- formula bar -->
<div class="abs" style="left:7px;top:194px;width:95.500px;height:24px;background:#fff;border:1px solid #d4d4d4;box-sizing:border-box"></div>
<span class="t" style="left:13.4px;top:202.14px;font-size:12.0px;color:#484848;letter-spacing:0.912px">A3</span>
<svg style="left:89px;top:203px" width="9" height="6" viewBox="0 0 9 6"><path d="M0.700 1h7l-3.500 3.800z" fill="#555"/></svg>
<svg style="left:115px;top:201px" width="4" height="12" viewBox="0 0 4 12" fill="#a8a8a8"><rect x="1.100" y="1.200" width="1.700" height="1.700"/><rect x="1.100" y="4.900" width="1.700" height="1.700"/><rect x="1.100" y="8.600" width="1.700" height="1.700"/></svg>
<div class="abs" style="left:131.500px;top:194px;width:103px;height:24px;background:#fff;border:1px solid #d4d4d4;box-sizing:border-box"></div>
<svg style="left:144px;top:203px" width="10" height="10" viewBox="0 0 10 10" stroke="#b4b4b4" stroke-width="1.300" fill="none"><path d="M1 1l8 8M9 1l-8 8"/></svg>
<svg style="left:177px;top:202px" width="12" height="11" viewBox="0 0 12 11" stroke="#b4b4b4" stroke-width="1.400" fill="none"><path d="M1 6l3.500 3.500L11 1.500"/></svg>
<span class="t" style="left:212.500px;top:199.500px;font-family:'Liberation Serif',serif;font-style:italic;font-weight:bold;font-size:14px;color:#5a5a5a;letter-spacing:-0.500px">f<span style="font-size:10px">x</span></span>
<div class="abs" style="left:238px;top:194px;width:779px;height:24px;background:#fff;border:1px solid #d4d4d4;box-sizing:border-box"></div>
<svg style="left:1003px;top:202px" width="10" height="8" viewBox="0 0 10 8" fill="none" stroke="#555" stroke-width="1.600"><path d="M1.500 2l3.500 3.500L8.500 2"/></svg>
<!-- grid -->
<div class="abs" style="left:2px;top:229px;width:24px;height:17px;background:#e6e6e6"></div>
<svg style="left:11px;top:232px" width="12" height="12" viewBox="0 0 12 12"><path d="M11 0.500V11H0.500z" fill="#b9b9b9"/></svg>
<svg style="left:0;top:0" width="1024" height="564" viewBox="0 0 1024 564"><rect x="25.93" y="246.70" width="974.07" height="314.90" fill="#ffffff"/><rect x="25.93" y="284.51" width="974.07" height="56.72" fill="#c8c8c8"/><rect x="25.93" y="284.51" width="75.57" height="18.91" fill="#ffffff"/><rect x="25.93" y="265.11" width="974.07" height="1.00" fill="#d3d3d3"/><rect x="101.50" y="302.92" width="898.50" height="1.00" fill="#aaaaaa"/><rect x="25.93" y="302.92" width="75.57" height="1.00" fill="#c0c0c0"/><rect x="27.43" y="321.83" width="972.57" height="1.00" fill="#aaaaaa"/><rect x="25.93" y="359.64" width="974.07" height="1.00" fill="#d3d3d3"/><rect x="25.93" y="378.55" width="974.07" height="1.00" fill="#d3d3d3"/><rect x="25.93" y="397.46" width="974.07" height="1.00" fill="#d3d3d3"/><rect x="25.93" y="416.36" width="974.07" height="1.00" fill="#d3d3d3"/><rect x="25.93" y="435.27" width="974.07" height="1.00" fill="#d3d3d3"/><rect x="25.93" y="454.18" width="974.07" height="1.00" fill="#d3d3d3"/><rect x="25.93" y="473.08" width="974.07" height="1.00" fill="#d3d3d3"/><rect x="25.93" y="491.99" width="974.07" height="1.00" fill="#d3d3d3"/><rect x="25.93" y="510.90" width="974.07" height="1.00" fill="#d3d3d3"/><rect x="25.93" y="529.81" width="974.07" height="1.00" fill="#d3d3d3"/><rect x="25.93" y="548.71" width="974.07" height="1.00" fill="#d3d3d3"/><rect x="101.00" y="246.70" width="1.00" height="314.90" fill="#cbcbcb"/><rect x="101.00" y="284.51" width="1.00" height="56.72" fill="#a2a2a2"/><rect x="176.57" y="246.70" width="1.00" height="314.90" fill="#cbcbcb"/><rect x="176.57" y="284.51" width="1.00" height="56.72" fill="#a2a2a2"/><rect x="252.13" y="246.70" width="1.00" height="314.90" fill="#cbcbcb"/><rect x="252.13" y="284.51" width="1.00" height="56.72" fill="#a2a2a2"/><rect x="327.70" y="246.70" width="1.00" height="314.90" fill="#cbcbcb"/><rect x="327.70" y="284.51" width="1.00" height="56.72" fill="#a2a2a2"/><rect x="403.27" y="246.70" width="1.00" height="314.90" fill="#cbcbcb"/><rect x="403.27" y="284.51" width="1.00" height="56.72" fill="#a2a2a2"/><rect x="478.84" y="246.70" width="1.00" height="314.90" fill="#cbcbcb"/><rect x="478.84" y="284.51" width="1.00" height="56.72" fill="#a2a2a2"/><rect x="554.41" y="246.70" width="1.00" height="314.90" fill="#cbcbcb"/><rect x="554.41" y="284.51" width="1.00" height="56.72" fill="#a2a2a2"/><rect x="629.97" y="246.70" width="1.00" height="314.90" fill="#cbcbcb"/><rect x="629.97" y="284.51" width="1.00" height="56.72" fill="#a2a2a2"/><rect x="705.54" y="246.70" width="1.00" height="314.90" fill="#cbcbcb"/><rect x="705.54" y="284.51" width="1.00" height="56.72" fill="#a2a2a2"/><rect x="781.11" y="246.70" width="1.00" height="314.90" fill="#cbcbcb"/><rect x="781.11" y="284.51" width="1.00" height="56.72" fill="#a2a2a2"/><rect x="856.68" y="246.70" width="1.00" height="314.90" fill="#cbcbcb"/><rect x="856.68" y="284.51" width="1.00" height="56.72" fill="#a2a2a2"/><rect x="932.25" y="246.70" width="1.00" height="314.90" fill="#cbcbcb"/><rect x="932.25" y="284.51" width="1.00" height="56.72" fill="#a2a2a2"/><rect x="25.93" y="228.80" width="974.07" height="17.90" fill="#d2d2d2"/><rect x="101.00" y="228.80" width="1.00" height="17.90" fill="#b2b2b2"/><rect x="176.57" y="228.80" width="1.00" height="17.90" fill="#b2b2b2"/><rect x="252.13" y="228.80" width="1.00" height="17.90" fill="#b2b2b2"/><rect x="327.70" y="228.80" width="1.00" height="17.90" fill="#b2b2b2"/><rect x="403.27" y="228.80" width="1.00" height="17.90" fill="#b2b2b2"/><rect x="478.84" y="228.80" width="1.00" height="17.90" fill="#b2b2b2"/><rect x="554.41" y="228.80" width="1.00" height="17.90" fill="#b2b2b2"/><rect x="629.97" y="228.80" width="1.00" height="17.90" fill="#b2b2b2"/><rect x="705.54" y="228.80" width="1.00" height="17.90" fill="#b2b2b2"/><rect x="781.11" y="228.80" width="1.00" height="17.90" fill="#b2b2b2"/><rect x="856.68" y="228.80" width="1.00" height="17.90" fill="#b2b2b2"/><rect x="932.25" y="228.80" width="1.00" height="17.90" fill="#b2b2b2"/><rect x="2.00" y="246.70" width="23.93" height="314.90" fill="#e6e6e6"/><rect x="2.00" y="284.51" width="23.93" height="56.72" fill="#d3f0e0"/><rect x="2.00" y="265.11" width="23.93" height="1.00" fill="#c6c6c6"/><rect x="2.00" y="284.01" width="23.93" height="1.00" fill="#c6c6c6"/><rect x="2.00" y="302.92" width="23.93" height="1.00" fill="#b0d8c2"/><rect x="2.00" y="321.83" width="23.93" height="1.00" fill="#b0d8c2"/><rect x="2.00" y="340.74" width="23.93" height="1.00" fill="#c6c6c6"/><rect x="2.00" y="359.64" width="23.93" height="1.00" fill="#c6c6c6"/><rect x="2.00" y="378.55" width="23.93" height="1.00" fill="#c6c6c6"/><rect x="2.00" y="397.46" width="23.93" height="1.00" fill="#c6c6c6"/><rect x="2.00" y="416.36" width="23.93" height="1.00" fill="#c6c6c6"/><rect x="2.00" y="435.27" width="23.93" height="1.00" fill="#c6c6c6"/><rect x="2.00" y="454.18" width="23.93" height="1.00" fill="#c6c6c6"/><rect x="2.00" y="473.08" width="23.93" height="1.00" fill="#c6c6c6"/><rect x="2.00" y="491.99" width="23.93" height="1.00" fill="#c6c6c6"/><rect x="2.00" y="510.90" width="23.93" height="1.00" fill="#c6c6c6"/><rect x="2.00" y="529.81" width="23.93" height="1.00" fill="#c6c6c6"/><rect x="2.00" y="548.71" width="23.93" height="1.00" fill="#c6c6c6"/><rect x="25.23" y="246.70" width="1.00" height="37.81" fill="#b4b4b4"/><rect x="25.23" y="341.24" width="1.00" height="220.37" fill="#b4b4b4"/><rect x="25.43" y="245.70" width="974.57" height="1.60" fill="#217346"/><rect x="24.93" y="283.30" width="975.07" height="2.00" fill="#25694a"/><rect x="24.93" y="340.70" width="975.07" height="1.90" fill="#25694a"/><rect x="24.98" y="283.30" width="1.70" height="59.30" fill="#25694a"/><rect x="26.68" y="303.92" width="0.80" height="36.61" fill="#e4e4e4"/><rect x="101.50" y="285.30" width="898.50" height="0.90" fill="#e2ebe5"/><rect x="26.68" y="339.80" width="973.32" height="0.90" fill="#e2ebe5"/><rect x="24.33" y="338.10" width="6.20" height="5.60" fill="#ffffff"/><rect x="24.98" y="338.90" width="5.00" height="4.60" fill="#25694a"/></svg>
<span class="t ch" style="left:44.71px;top:231.8px;width:40px">A</span>
<span class="t ch" style="left:120.28px;top:231.8px;width:40px">B</span>
<span class="t ch" style="left:195.85px;top:231.8px;width:40px">C</span>
<span class="t ch" style="left:271.42px;top:231.8px;width:40px">D</span>
<span class="t ch" style="left:346.99px;top:231.8px;width:40px">E</span>
<span class="t ch" style="left:422.55px;top:231.8px;width:40px">F</span>
<span class="t ch" style="left:498.12px;top:231.8px;width:40px">G</span>
<span class="t ch" style="left:573.69px;top:231.8px;width:40px">H</span>
<span class="t ch" style="left:649.26px;top:231.8px;width:40px">I</span>
<span class="t ch" style="left:724.83px;top:231.8px;width:40px">J</span>
<span class="t ch" style="left:800.39px;top:231.8px;width:40px">K</span>
<span class="t ch" style="left:875.96px;top:231.8px;width:40px">L</span>
<span class="t ch" style="left:951.53px;top:231.8px;width:40px">M</span>
<span class="t rh" style="left:0px;top:251.97px;width:27px;color:#3c3c3c;letter-spacing:0">1</span>
<span class="t rh" style="left:0px;top:270.97px;width:27px;color:#3c3c3c;letter-spacing:0">2</span>
<span class="t rh" style="left:0px;top:289.97px;width:27px;color:#217346;letter-spacing:0">3</span>
<span class="t rh" style="left:0px;top:308.97px;width:27px;color:#217346;letter-spacing:0">4</span>
<span class="t rh" style="left:0px;top:327.97px;width:27px;color:#217346;letter-spacing:0">5</span>
<span class="t rh" style="left:0px;top:345.97px;width:27px;color:#3c3c3c;letter-spacing:0">6</span>
<span class="t rh" style="left:0px;top:364.97px;width:27px;color:#3c3c3c;letter-spacing:0">7</span>
<span class="t rh" style="left:0px;top:383.97px;width:27px;color:#3c3c3c;letter-spacing:0">8</span>
<span class="t rh" style="left:0px;top:402.97px;width:27px;color:#3c3c3c;letter-spacing:0">9</span>
<span class="t rh" style="left:0px;top:421.97px;width:27px;color:#3c3c3c;letter-spacing:0.5px">10</span>
<span class="t rh" style="left:0px;top:440.97px;width:27px;color:#3c3c3c;letter-spacing:0.5px">11</span>
<span class="t rh" style="left:0px;top:459.97px;width:27px;color:#3c3c3c;letter-spacing:0.5px">12</span>
<span class="t rh" style="left:0px;top:478.97px;width:27px;color:#3c3c3c;letter-spacing:0.5px">13</span>
<span class="t rh" style="left:0px;top:497.97px;width:27px;color:#3c3c3c;letter-spacing:0.5px">14</span>
<span class="t rh" style="left:0px;top:516.97px;width:27px;color:#3c3c3c;letter-spacing:0.5px">15</span>
<span class="t rh" style="left:0px;top:535.97px;width:27px;color:#3c3c3c;letter-spacing:0.5px">16</span>
<span class="t rh" style="left:0px;top:553.97px;width:27px;color:#3c3c3c;letter-spacing:0.5px">17</span>
<!-- scrollbar -->
<div class="abs" style="left:1000px;top:229px;width:21px;height:333px;background:#e6e6e6"></div>
<div class="abs" style="left:1005px;top:245px;width:12px;height:305px;background:#d0d0d0"></div>
<div class="abs" style="left:1005px;top:231.5px;width:12px;height:12px;background:#fff;border:1px solid #cfcfcf;box-sizing:border-box"></div>
<div class="abs" style="left:1005px;top:245px;width:12px;height:242px;background:#fff;border:1px solid #cfcfcf;box-sizing:border-box"></div>
<div class="abs" style="left:1005px;top:550px;width:12px;height:12px;background:#fff;border:1px solid #cfcfcf;box-sizing:border-box"></div>
<div class="dd" style="left:1008px;top:236px;border-top:none;border-bottom:3px solid #666"></div>
<div class="dd" style="left:1008px;top:555px;border-top-color:#666"></div>
<!-- bottom -->
<div class="abs" style="left:2px;top:561.5px;width:1019px;height:1px;background:#9f9f9f"></div>
<div class="abs" style="left:2px;top:562.5px;width:1019px;height:2px;background:#e6e6e6"></div>
<div class="abs" style="left:155px;top:561.5px;width:56px;height:3px;background:#fff"></div>
</div></body></html>
